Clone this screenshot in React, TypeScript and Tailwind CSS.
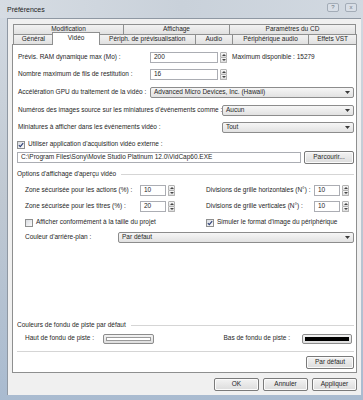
import React from "react";

function Down() {
  return (
    <svg width="5" height="3" viewBox="0 0 5 3">
      <path d="M0 0h5L2.5 3z" fill="#3a3a3a" />
    </svg>
  );
}

function Spin() {
  return (
    <div className="ml-[2px] flex h-[11px] w-[7px] flex-col">
      <div className="flex flex-1 items-center justify-center rounded-t-[1px] border border-[#b3b3b3] bg-linear-to-b from-[#f8f8f8] to-[#dddddd]">
        <svg width="4" height="2" viewBox="0 0 4 2">
          <path d="M0 2L2 0L4 2z" fill="#444" />
        </svg>
      </div>
      <div className="flex flex-1 items-center justify-center rounded-b-[1px] border border-t-0 border-[#b3b3b3] bg-linear-to-b from-[#f8f8f8] to-[#dddddd]">
        <svg width="4" height="2" viewBox="0 0 4 2">
          <path d="M0 0h4L2 2z" fill="#444" />
        </svg>
      </div>
    </div>
  );
}

function Field({ value, className }: { value: string; className: string }) {
  return (
    <div className={`flex h-[11px] items-center border border-[#abadb3] bg-white pl-[3px] ${className}`}>
      {value}
    </div>
  );
}

function Select({ value, className }: { value: string; className: string }) {
  return (
    <div
      className={`flex h-[11px] items-center justify-between rounded-[2px] border border-[#8c8c8c] bg-linear-to-b from-[#f6f6f6] to-[#e2e2e2] pl-[3px] pr-[3px] ${className}`}
    >
      <span>{value}</span>
      <Down />
    </div>
  );
}

function Check({ on }: { on?: boolean }) {
  return (
    <div className="flex h-[8px] w-[8px] shrink-0 items-center justify-center border border-[#8e8f8f] bg-linear-to-br from-[#d8dbe0] to-[#fbfbfb]">
      {on && (
        <svg width="6" height="6" viewBox="0 0 6 6">
          <path d="M0.8 3.1L2.3 4.6L5.2 1.1" stroke="#2d3f75" strokeWidth="1.1" fill="none" />
        </svg>
      )}
    </div>
  );
}

function Btn({ label, className }: { label: string; className: string }) {
  return (
    <div
      className={`flex h-[13px] items-center justify-center rounded-[2px] border border-[#7a7a7a] bg-linear-to-b from-[#f3f3f3] to-[#dcdcdc] shadow-[inset_0_0_0_1px_#fbfbfb] ${className}`}
    >
      {label}
    </div>
  );
}

function Tab({ label, className }: { label: string; className: string }) {
  return (
    <div
      className={`-ml-px flex items-center justify-center border border-b-0 border-[#8e8f8f] bg-linear-to-b from-[#f2f2f2] to-[#e1e1e1] first:ml-0 ${className}`}
    >
      {label}
    </div>
  );
}

export default function App() {
  return (
    <div className="relative flex h-[400px] w-[363px] flex-col overflow-hidden whitespace-nowrap bg-linear-to-b from-[#d3dae2] via-[#bfc8d2] to-[#a9bbd0] font-['Liberation_Sans',Arial,sans-serif] text-[6.5px] leading-none text-[#262626]">
      {/* title bar */}
      <div className="flex h-[18px] shrink-0 items-center justify-between bg-linear-to-r from-[#d6dce3] via-[#c9d1da] to-[#d2d9e1] pl-[7px] pr-[6px]">
        <span className="text-[7px] text-[#1c1c1c]">Préférences</span>
        <div className="flex gap-[6px] pb-[4px]">
          <div className="flex h-[9px] w-[12px] items-center justify-center rounded-[2px] border border-[#a3acb7] bg-[#d8dee6] text-[6px] text-[#6d7682]">
            ?
          </div>
          <div className="flex h-[9px] w-[12px] items-center justify-center rounded-[2px] border border-[#a3acb7] bg-[#d8dee6] text-[6px] text-[#6d7682]">
            x
          </div>
        </div>
      </div>

      {/* client */}
      <div className="ml-[7px] mr-[2px] flex h-[377px] shrink-0 flex-col border-l border-t border-[#8f98a3] bg-[#f0f0f0] pl-[4px] pr-[4px] pt-[5px]">
        {/* tab rows */}
        <div className="ml-px flex h-[10px]">
          <Tab label="Modification" className="w-[111px]" />
          <Tab label="Affichage" className="w-[107px]" />
          <Tab label="Paramètres du CD" className="w-[127px]" />
        </div>
        <div className="ml-px flex h-[10px]">
          <Tab label="Général" className="w-[41px]" />
          <div className="relative z-10 -mx-[2px] -mb-px -mt-[2px] flex h-[13px] w-[49px] items-center justify-center border border-b-0 border-[#8e8f8f] bg-white pb-[1px]">
            Vidéo
          </div>
          <Tab label="Périph. de prévisualisation" className="ml-0 w-[98px]" />
          <Tab label="Audio" className="w-[38px]" />
          <Tab label="Périphérique audio" className="w-[78px]" />
          <Tab label="Effets VST" className="w-[49px]" />
        </div>

        {/* panel */}
        <div className="flex h-[329px] w-[345px] flex-col border border-[#8e8f8f] bg-white pl-[5px] pr-[2px]">
          <div className="mt-[7px] flex h-[11px] items-center">
            <span className="w-[132px]">Prévis. RAM dynamique max (Mo) :</span>
            <Field value="200" className="w-[68px]" />
            <Spin />
            <span className="ml-[5px]">Maximum disponible : 15279</span>
          </div>
          <div className="mt-[6px] flex h-[11px] items-center">
            <span className="w-[132px]">Nombre maximum de fils de restitution :</span>
            <Field value="16" className="w-[68px]" />
            <Spin />
          </div>
          <div className="mt-[7px] flex h-[11px] items-center">
            <span className="w-[132px]">Accélération GPU du traitement de la vidéo :</span>
            <Select value="Advanced Micro Devices, Inc. (Hawaii)" className="flex-1" />
          </div>
          <div className="mt-[7px] flex h-[11px] items-center">
            <span className="w-[204px]">Numéros des images source sur les miniatures d'événements comme :</span>
            <Select value="Aucun" className="flex-1" />
          </div>
          <div className="mt-[6px] flex h-[11px] items-center">
            <span className="w-[204px]">Miniatures à afficher dans les événements vidéo :</span>
            <Select value="Tout" className="flex-1" />
          </div>

          <div className="-ml-px mt-[7px] flex h-[9px] items-center gap-[3px]">
            <Check on />
            <span>Utiliser application d'acquisition vidéo externe :</span>
          </div>
          <div className="-ml-px mt-[2px] flex h-[12px] items-center">
            <Field value="C:\Program Files\Sony\Movie Studio Platinum 12.0\VidCap60.EXE" className="h-[10px] w-[284px]" />
            <Btn label="Parcourir..." className="ml-auto h-[12px] w-[50px]" />
          </div>

          <div className="-ml-px mt-[7px] flex h-[9px] items-center">
            <span>Options d'affichage d'aperçu vidéo</span>
            <div className="ml-[5px] h-px flex-1 bg-[#d5d5d5]" />
          </div>

          <div className="mt-[6px] flex h-[11px] items-center pl-[7px]">
            <span className="w-[115px]">Zone sécurisée pour les actions (%) :</span>
            <Field value="10" className="w-[26px]" />
            <Spin />
            <span className="ml-[31px] w-[108px]">Divisions de grille horizontales (N°) :</span>
            <Field value="10" className="w-[26px]" />
            <Spin />
          </div>
          <div className="mt-[5px] flex h-[11px] items-center pl-[7px]">
            <span className="w-[115px]">Zone sécurisée pour les titres (%) :</span>
            <Field value="20" className="w-[26px]" />
            <Spin />
            <span className="ml-[31px] w-[108px]">Divisions de grille verticales (N°) :</span>
            <Field value="10" className="w-[26px]" />
            <Spin />
          </div>
          <div className="mt-[6px] flex h-[9px] items-center pl-[7px]">
            <div className="flex w-[181px] items-center gap-[3px]">
              <Check />
              <span>Afficher conformément à la taille du projet</span>
            </div>
            <Check on />
            <span className="ml-[3px]">Simuler le format d'image du périphérique</span>
          </div>
          <div className="mt-[5px] flex h-[11px] items-center pl-[7px]">
            <span className="w-[93px]">Couleur d'arrière-plan :</span>
            <Select value="Par défaut" className="flex-1" />
          </div>

          <div className="-ml-px mt-[78px] flex h-[9px] items-center">
            <span>Couleurs de fondu de piste par défaut</span>
            <div className="ml-[5px] h-px flex-1 bg-[#d5d5d5]" />
          </div>
          <div className="mt-[3px] flex h-[11px] items-center pl-[7px]">
            <span className="w-[78px]">Haut de fondu de piste :</span>
            <div className="h-[10px] w-[51px] rounded-[2px] border border-[#8c8c8c] bg-linear-to-b from-[#f2f2f2] to-[#dedede] p-[2px]">
              <div className="h-full w-full border border-[#9a9a9a] bg-white" />
            </div>
            <span className="ml-auto mr-[12px]">Bas de fondu de piste :</span>
            <div className="mr-[2px] h-[10px] w-[50px] rounded-[2px] border border-[#8c8c8c] bg-linear-to-b from-[#f2f2f2] to-[#dedede] p-[2px]">
              <div className="h-full w-full bg-black" />
            </div>
          </div>
          <div className="-ml-px mt-[7px] h-px bg-[#d5d5d5]" />
          <div className="mt-[4px] flex justify-end">
            <Btn label="Par défaut" className="w-[48px]" />
          </div>
        </div>

        {/* dialog buttons */}
        <div className="mt-[5px] flex justify-end gap-[4px]">
          <Btn label="OK" className="w-[45px]" />
          <Btn label="Annuler" className="w-[45px]" />
          <Btn label="Appliquer" className="w-[45px]" />
        </div>
      </div>
    </div>
  );
}
